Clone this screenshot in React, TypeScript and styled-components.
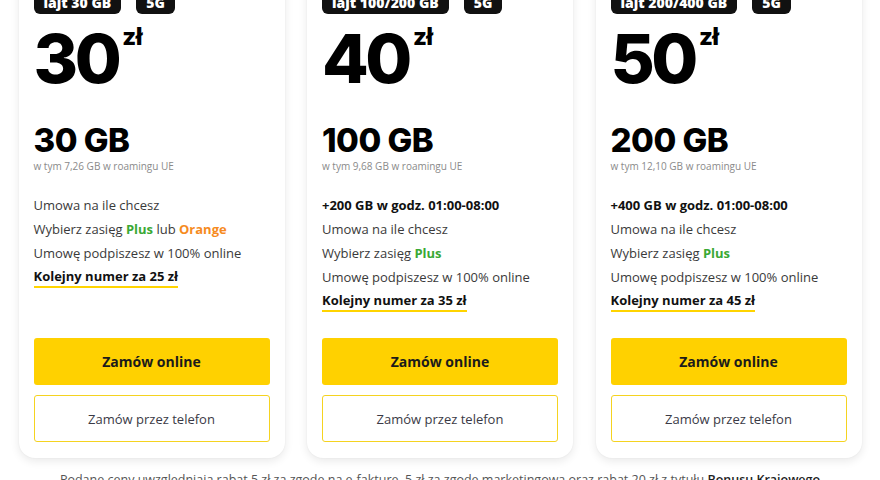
import React from "react";
import styled, { createGlobalStyle } from "styled-components";

const Global = createGlobalStyle`
  html, body { margin: 0; padding: 0; background: #ffffff; }
  body { font-family: "Open Sans", "Noto Sans", sans-serif; color: #1b1b1b; overflow: hidden; }
  * { box-sizing: border-box; }
`;

const Page = styled.div`
  width: 880px;
  height: 480px;
  overflow: hidden;
  display: flex;
  flex-direction: column;
  align-items: center;
`;

const Cards = styled.div`
  display: grid;
  grid-template-columns: repeat(3, 266px);
  column-gap: 22.5px;
  margin-top: -30px;
`;

const Card = styled.div`
  background: #fff;
  border-radius: 16px;
  box-shadow: 0 3px 10px rgba(0, 0, 0, 0.09), 0 0 2px rgba(0, 0, 0, 0.05);
  padding: 22px 15px 16px;
  display: flex;
  flex-direction: column;
`;

const Badges = styled.div`
  display: flex;
  gap: 15px;
`;

const Badge = styled.span`
  background: #111;
  color: #fff;
  font-weight: 800;
  font-size: 14px;
  line-height: 22px;
  height: 22px;
  padding: 0 10px;
  border-radius: 6px;
`;

const PriceRow = styled.div`
  display: flex;
  align-items: flex-start;
  margin-top: 12px;
  height: 70px;
`;

const Price = styled.span`
  font-family: Inter, "Open Sans", sans-serif;
  font-size: 68px;
  font-weight: 800;
  line-height: 64px;
  letter-spacing: -3.5px;
  color: #000;
`;

const Currency = styled.span`
  font-family: Inter, "Open Sans", sans-serif;
  font-size: 24px;
  font-weight: 800;
  line-height: 22px;
  margin-left: 4px;
  letter-spacing: -0.5px;
  color: #000;
`;

const Data = styled.div`
  font-family: Inter, "Open Sans", sans-serif;
  margin-top: 26px;
  font-size: 33px;
  font-weight: 800;
  line-height: 36px;
  letter-spacing: -0.5px;
  color: #000;
`;

const Roaming = styled.div`
  font-size: 10px;
  line-height: 14px;
  color: #8a8a8a;
  margin-top: 1px;
`;

const Features = styled.ul`
  list-style: none;
  margin: 20px 0 0;
  padding: 0;
  flex: 1;
  display: flex;
  flex-direction: column;
`;

const Feature = styled.li<{ $bold?: boolean; $underline?: boolean }>`
  font-size: 13px;
  line-height: 24px;
  color: ${(p) => (p.$bold ? "#111" : "#3a3a3a")};
  font-weight: ${(p) => (p.$bold ? 700 : 400)};
  align-self: flex-start;
  ${(p) => (p.$underline ? "border-bottom: 2px solid #ffd400; line-height: 19px; margin-top: 2px;" : "")}
`;

const Accent = styled.span<{ $color: string }>`
  color: ${(p) => p.$color};
  font-weight: 700;
`;

const Actions = styled.div`
  display: flex;
  flex-direction: column;
  gap: 10px;
  margin-top: 26px;
`;

const Button = styled.button<{ $primary?: boolean }>`
  height: 47px;
  width: 100%;
  border-radius: 3px;
  font-family: inherit;
  font-size: ${(p) => (p.$primary ? "14px" : "13px")};
  font-weight: ${(p) => (p.$primary ? 700 : 400)};
  color: ${(p) => (p.$primary ? "#1b1b1b" : "#3a3a46")};
  background: ${(p) => (p.$primary ? "#ffd100" : "#fff")};
  border: ${(p) => (p.$primary ? "none" : "1.5px solid #f5d320")};
  cursor: pointer;
`;

const Note = styled.p`
  margin: 14px 0 0;
  font-size: 12.5px;
  line-height: 16px;
  color: #555;
  text-align: center;
  white-space: nowrap;
  b { color: #222; font-weight: 600; }
`;

type Plan = {
  badge: string;
  price: string;
  data: string;
  roaming: string;
  extra?: string;
  orange?: boolean;
  next: string;
};

const plans: Plan[] = [
  { badge: "lajt 30 GB", price: "30", data: "30 GB", roaming: "w tym 7,26 GB w roamingu UE", orange: true, next: "Kolejny numer za 25 zł" },
  { badge: "lajt 100/200 GB", price: "40", data: "100 GB", roaming: "w tym 9,68 GB w roamingu UE", extra: "+200 GB w godz. 01:00-08:00", next: "Kolejny numer za 35 zł" },
  { badge: "lajt 200/400 GB", price: "50", data: "200 GB", roaming: "w tym 12,10 GB w roamingu UE", extra: "+400 GB w godz. 01:00-08:00", next: "Kolejny numer za 45 zł" },
];

export default function App() {
  return (
    <>
      <Global />
      <Page>
        <Cards>
          {plans.map((p) => (
            <Card key={p.badge}>
              <Badges>
                <Badge>{p.badge}</Badge>
                <Badge>5G</Badge>
              </Badges>
              <PriceRow>
                <Price>{p.price}</Price>
                <Currency>zł</Currency>
              </PriceRow>
              <Data>{p.data}</Data>
              <Roaming>{p.roaming}</Roaming>
              <Features>
                {p.extra && <Feature $bold>{p.extra}</Feature>}
                <Feature>Umowa na ile chcesz</Feature>
                <Feature>
                  Wybierz zasięg <Accent $color="#3aa935">Plus</Accent>
                  {p.orange && (
                    <>
                      {" "}lub <Accent $color="#f68b1f">Orange</Accent>
                    </>
                  )}
                </Feature>
                <Feature>Umowę podpiszesz w 100% online</Feature>
                <Feature $bold $underline>{p.next}</Feature>
              </Features>
              <Actions>
                <Button $primary>Zamów online</Button>
                <Button>Zamów przez telefon</Button>
              </Actions>
            </Card>
          ))}
        </Cards>
        <Note>
          Podane ceny uwzględniają rabat 5 zł za zgodę na e-fakturę, 5 zł za zgodę marketingową oraz rabat 20 zł z tytułu <b>Bonusu Krajowego</b>
        </Note>
      </Page>
    </>
  );
}
